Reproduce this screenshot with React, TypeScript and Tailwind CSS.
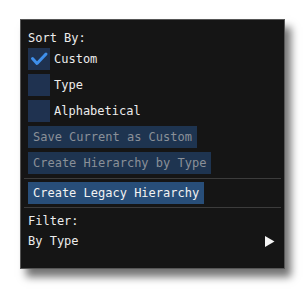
const font = { fontFamily: '"DejaVu Sans Mono", "Liberation Mono", monospace' };

const Checkbox = ({ label, checked }: { label: string; checked?: boolean }) => (
    <div className="flex items-center h-[22px] gap-[4px]">
        <div className="w-[22px] h-[22px] bg-[#1f3250] flex items-center justify-center">
            {checked && (
                <svg width="22" height="22" viewBox="0 0 22 22">
                    <path d="M4.5 10.5 L9 15.5 L18 6" fill="none" stroke="#3f8fea" strokeWidth="3" strokeLinecap="round" strokeLinejoin="round" />
                </svg>
            )}
        </div>
        <span className="text-[#ececec]">{label}</span>
    </div>
);

const Button = ({ label, active }: { label: string; active?: boolean }) => (
    <div
        className={
            active
                ? 'self-start h-[22px] px-[5px] leading-[22px] bg-[#284e79] text-[#f2f2f2]'
                : 'self-start h-[22px] px-[5px] leading-[22px] bg-[#1e3450] text-[#8a9098]'
        }
    >
        {label}
    </div>
);

export default function App() {
    return (
        <div className="w-[305px] h-[290px] bg-white pt-[19px] pl-[20px]" style={font}>
            <div className="w-[265px] h-[250px] bg-[#151515] border border-[#565656] shadow-[6px_8px_8px_rgba(0,0,0,0.55)] px-[7px] pt-[10px] flex flex-col text-[12px] leading-[16px]">
                <div className="h-[16px] text-[#ececec]">Sort By:</div>
                <div className="mt-[2px] flex flex-col gap-[4px]">
                    <Checkbox label="Custom" checked />
                    <Checkbox label="Type" />
                    <Checkbox label="Alphabetical" />
                    <Button label="Save Current as Custom" />
                    <Button label="Create Hierarchy by Type" />
                </div>
                <div className="mt-[4px] -mx-[4px] h-px bg-[#3c3c3c]" />
                <div className="mt-[3px] flex flex-col">
                    <Button label="Create Legacy Hierarchy" active />
                </div>
                <div className="mt-[3px] -mx-[4px] h-px bg-[#3c3c3c]" />
                <div className="mt-[5px] h-[16px] text-[#ececec]">Filter:</div>
                <div className="mt-[4px] h-[16px] flex items-center justify-between text-[#ececec]">
                    <span>By Type</span>
                    <svg width="10" height="11" viewBox="0 0 10 11" className="mr-[2px]">
                        <path d="M0 0 L9.5 5.5 L0 11 Z" fill="#f4f4f4" />
                    </svg>
                </div>
            </div>
        </div>
    );
}
